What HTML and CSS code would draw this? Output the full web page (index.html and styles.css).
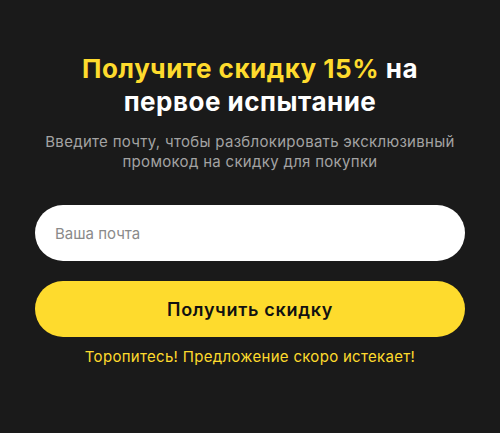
FILE: index.html
```html
<!DOCTYPE html>
<html lang="ru">
<head>
<meta charset="utf-8">
<link rel="stylesheet" href="styles.css">
</head>
<body>
<div class="card">
  <h1 class="title"><span class="accent">Получите скидку 15%</span> на первое испытание</h1>
  <p class="subtitle">Введите почту, чтобы разблокировать эксклюзивный промокод на скидку для покупки</p>
  <form class="form">
    <input class="email" type="email" placeholder="Ваша почта">
    <button class="submit" type="button">Получить скидку</button>
  </form>
  <p class="note">Торопитесь! Предложение скоро истекает!</p>
</div>
</body>
</html>
```
FILE: styles.css
```css
html, body {
  margin: 0;
  padding: 0;
  background: #1a1a1a;
  height: 100%;
}
body {
  font-family: Inter, "Noto Sans", sans-serif;
}
.card {
  padding: 52px 35px 0;
  display: flex;
  flex-direction: column;
  align-items: stretch;
  text-align: center;
}
.title {
  margin: 0 auto;
  max-width: 380px;
  font-size: 26px;
  line-height: 33px;
  font-weight: 700;
  color: #ffffff;
  letter-spacing: 0.5px;
}
.accent {
  color: #fedb2d;
}
.subtitle {
  margin: 14px auto 0;
  max-width: 430px;
  font-size: 15px;
  line-height: 20px;
  color: #a3a3a3;
  letter-spacing: 0.3px;
}
.form {
  margin-top: 33px;
  display: flex;
  flex-direction: column;
  gap: 20px;
}
.email {
  height: 56px;
  box-sizing: border-box;
  border: none;
  border-radius: 28px;
  background: #ffffff;
  padding: 0 20px;
  font-family: Inter, sans-serif;
  font-size: 15px;
  color: #222;
  outline: none;
}
.email::placeholder {
  color: #8a8a8a;
}
.submit {
  height: 56px;
  border: none;
  border-radius: 28px;
  background: #fedb2d;
  color: #111;
  font-family: Inter, sans-serif;
  font-size: 18px;
  font-weight: 600;
  letter-spacing: 0.7px;
  cursor: pointer;
}
.note {
  margin: 10px 0 0;
  font-size: 15px;
  line-height: 20px;
  color: #fedb2d;
  letter-spacing: 0.3px;
}
```
